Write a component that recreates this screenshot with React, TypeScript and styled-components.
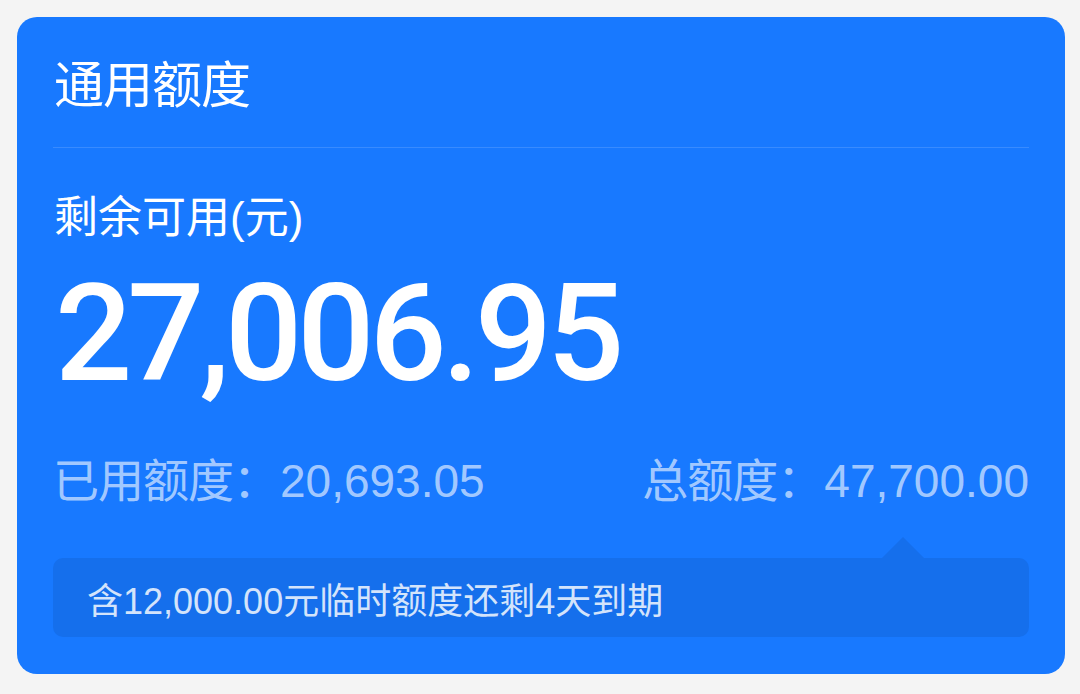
import * as React from "react";
import styled, { createGlobalStyle } from "styled-components";

const GlobalStyle = createGlobalStyle`
    html, body {
        margin: 0;
        padding: 0;
        background: #f4f4f4;
    }
    body {
        font-family: "Liberation Sans", "Noto Sans CJK SC", sans-serif;
        -webkit-font-smoothing: antialiased;
    }
`;

const Page = styled.div`
    width: 1080px;
    height: 694px;
    box-sizing: border-box;
    padding: 17px 15px 20px 17px;
    background: #f4f4f4;
`;

const Card = styled.section`
    box-sizing: border-box;
    width: 1048px;
    height: 657px;
    background: #1879ff;
    border-radius: 20px;
    padding: 0 36px 0 36px;
    display: flex;
    flex-direction: column;
    color: #fff;
`;

const Header = styled.div`
    height: 128px;
    display: flex;
    align-items: center;
    border-bottom: 1px solid rgba(255, 255, 255, 0.14);
    padding-left: 1px;
    padding-bottom: 2px;
`;

const Title = styled.h2`
    margin: 0;
    font-family: "Noto Sans CJK SC", sans-serif;
    font-size: 50px;
    font-weight: 400;
    line-height: 1;
    letter-spacing: -1px;
`;

const Label = styled.div`
    margin-top: 48px;
    padding-left: 1px;
    font-family: "Liberation Sans", "Noto Sans CJK SC", sans-serif;
    font-size: 44px;
    line-height: 44px;
`;

const Amount = styled.div`
    margin-top: 26px;
    font-family: Roboto, "Liberation Sans", sans-serif;
    font-weight: 500;
    font-size: 136px;
    line-height: 136px;
    letter-spacing: -5px;
    padding-left: 2px;
`;

const StatRow = styled.div`
    margin-top: 52px;
    display: flex;
    justify-content: space-between;
    align-items: baseline;
    color: rgba(255, 255, 255, 0.62);
    font-family: "Liberation Sans", "Noto Sans CJK SC", sans-serif;
    font-size: 46px;
    line-height: 46px;
`;

const Stat = styled.div`
    display: flex;
    align-items: baseline;
    white-space: nowrap;
`;

const StatName = styled.span`
    font-family: "Noto Sans CJK SC", sans-serif;
    letter-spacing: -1px;
`;

const StatValue = styled.span`
    margin-left: 2px;
`;

const Notice = styled.div`
    position: relative;
    margin-top: 54px;
    height: 79px;
    border-radius: 10px;
    background: #156fec;
    display: flex;
    align-items: center;
    padding-left: 34px;
    font-family: "Liberation Sans", "Noto Sans CJK SC", sans-serif;
    font-size: 36px;
    color: rgba(255, 255, 255, 0.82);
    white-space: nowrap;

    &::before {
        content: "";
        position: absolute;
        right: 105px;
        top: -21px;
        width: 0;
        height: 0;
        border-left: 21px solid transparent;
        border-right: 21px solid transparent;
        border-bottom: 21px solid #156fec;
    }
`;

const App: React.FC = () => {
    return (
        <>
            <GlobalStyle />
            <Page>
                <Card>
                    <Header>
                        <Title>通用额度</Title>
                    </Header>
                    <Label>剩余可用(元)</Label>
                    <Amount>27,006.95</Amount>
                    <StatRow>
                        <Stat>
                            <StatName>已用额度：</StatName>
                            <StatValue>20,693.05</StatValue>
                        </Stat>
                        <Stat>
                            <StatName>总额度：</StatName>
                            <StatValue>47,700.00</StatValue>
                        </Stat>
                    </StatRow>
                    <Notice>含12,000.00元临时额度还剩4天到期</Notice>
                </Card>
            </Page>
        </>
    );
};

export default App;
